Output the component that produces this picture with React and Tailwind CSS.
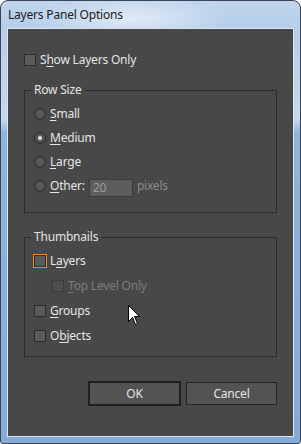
import React from "react";

const U = ({ children }) => (
  <span className="underline underline-offset-[2px] decoration-[1px]">{children}</span>
);

const Check = ({ focus, disabled }) => (
  <span
    className={
      "block w-[12px] h-[12px] border " +
      (disabled
        ? "border-[#3c3c3c] bg-[#4e4e4e]"
        : focus
        ? "border-[#2e2e2e] bg-[#5a5a5a] outline outline-1 outline-[#e8892c]"
        : "border-[#2e2e2e] bg-[#5a5a5a]")
    }
  />
);

const Radio = ({ checked }) => (
  <span className="flex items-center justify-center w-[12px] h-[12px] rounded-full border border-[#2a2a2a] bg-[radial-gradient(circle_at_50%_40%,#5e5e5e,#4a4a4a)]">
    {checked && <span className="block w-[4px] h-[4px] rounded-full bg-[#e6e6e6]" />}
  </span>
);

export default function App() {
  return (
    <div
      className="relative w-[301px] h-[444px] flex flex-col rounded-t-[8px] rounded-b-[3px] border border-[#3b4452] bg-[linear-gradient(180deg,#c0d5ed_0px,#b6cee9_28px,#c6d9ee_118px,#91b4dc_132px,#86abd6_100%)] text-[12px] leading-[16px] tracking-[-0.2px]"
      style={{ fontFamily: '"Noto Sans", "Open Sans", sans-serif' }}
    >
      <div className="h-[27px] flex items-center pl-[7px] pt-[1px] bg-[radial-gradient(ellipse_100px_22px_at_130px_18px,rgba(255,255,255,0.55),transparent)] text-[#1b1b1b]">
        Layers Panel Options
      </div>
      <div className="mx-[6px] border border-[#dae6f3] bg-[#484848] flex-1 mb-[6px] flex flex-col px-[16px] pt-[23px] text-[#e4e4e4]">
        <div className="h-[16px] flex items-center gap-[4px]">
          <Check />
          <span>
            S<U>h</U>ow Layers Only
          </span>
        </div>

        <div className="relative mt-[22px] h-[123px] border border-[#2b2b2b] pl-[9px] pt-[11px]">
          <span className="absolute -top-[9px] left-[6px] px-[3px] bg-[#484848]">Row Size</span>
          <div className="h-[24px] flex items-center gap-[4px]">
            <Radio />
            <span><U>S</U>mall</span>
          </div>
          <div className="h-[24px] flex items-center gap-[4px]">
            <Radio checked />
            <span><U>M</U>edium</span>
          </div>
          <div className="h-[24px] flex items-center gap-[4px]">
            <Radio />
            <span><U>L</U>arge</span>
          </div>
          <div className="h-[24px] flex items-center gap-[4px]">
            <Radio />
            <span><U>O</U>ther:</span>
            <span className="mt-[3px] w-[44px] h-[18px] border border-[#3a3a3a] bg-[#5d5d5d] text-[#9e9e9e] pl-[3px] flex items-center">
              20
            </span>
            <span className="text-[#8a8a8a]">pixels</span>
          </div>
        </div>

        <div className="relative mt-[24px] h-[120px] border border-[#2b2b2b] pl-[9px] pt-[10px]">
          <span className="absolute -top-[9px] left-[6px] px-[3px] bg-[#484848]">Thumbnails</span>
          <div className="h-[25px] flex items-center gap-[4px]">
            <Check focus />
            <span>L<U>a</U>yers</span>
          </div>
          <div className="h-[25px] flex items-center gap-[4px] pl-[18px] text-[#7c7c7c]">
            <Check disabled />
            <span><U>T</U>op Level Only</span>
          </div>
          <div className="h-[25px] flex items-center gap-[4px]">
            <Check />
            <span><U>G</U>roups</span>
          </div>
          <div className="h-[25px] flex items-center gap-[4px]">
            <Check />
            <span>O<U>b</U>jects</span>
          </div>
        </div>

        <div className="mt-[24px] flex justify-end items-center gap-[5px]">
          <button className="w-[93px] h-[25px] border-2 border-[#1f1f1f] bg-[#535353] text-[#e4e4e4] flex items-center justify-center">
            OK
          </button>
          <button className="w-[91px] h-[23px] border border-[#262626] bg-[#535353] text-[#e4e4e4] flex items-center justify-center">
            Cancel
          </button>
        </div>
      </div>

      <svg
        className="absolute left-[127px] top-[304px]"
        width="13"
        height="21"
        viewBox="0 0 13 21"
      >
        <path
          d="M0.5 0.5 L0.5 16.5 L4.5 12.5 L7.5 19.5 L9.5 18.5 L6.5 11.5 L11.5 11.5 Z"
          fill="#ffffff"
          stroke="#000000"
          strokeWidth="1"
          strokeLinejoin="miter"
        />
      </svg>
    </div>
  );
}
